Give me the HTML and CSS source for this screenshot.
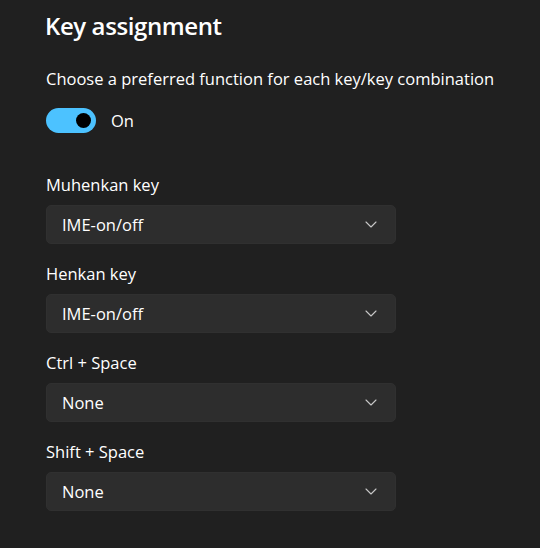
FILE: index.html
```html
<!DOCTYPE html>
<html>
<head>
<meta charset="utf-8">
<link rel="stylesheet" href="styles.css">
</head>
<body>
<main class="page">
  <h1 class="title">Key assignment</h1>
  <p class="desc">Choose a preferred function for each key/key combination</p>
  <div class="toggle-row">
    <span class="toggle"><span class="knob"></span></span>
    <span class="toggle-label">On</span>
  </div>
  <div class="fields">
    <div class="field">
      <div class="label">Muhenkan key</div>
      <div class="select"><span>IME-on/off</span><svg class="chev" width="12" height="7" viewBox="0 0 12 7"><polyline points="1,1 6,6 11,1" fill="none" stroke="#c8c8c8" stroke-width="1.1" stroke-linecap="round" stroke-linejoin="round"/></svg></div>
    </div>
    <div class="field">
      <div class="label">Henkan key</div>
      <div class="select"><span>IME-on/off</span><svg class="chev" width="12" height="7" viewBox="0 0 12 7"><polyline points="1,1 6,6 11,1" fill="none" stroke="#c8c8c8" stroke-width="1.1" stroke-linecap="round" stroke-linejoin="round"/></svg></div>
    </div>
    <div class="field">
      <div class="label">Ctrl + Space</div>
      <div class="select"><span>None</span><svg class="chev" width="12" height="7" viewBox="0 0 12 7"><polyline points="1,1 6,6 11,1" fill="none" stroke="#c8c8c8" stroke-width="1.1" stroke-linecap="round" stroke-linejoin="round"/></svg></div>
    </div>
    <div class="field">
      <div class="label">Shift + Space</div>
      <div class="select"><span>None</span><svg class="chev" width="12" height="7" viewBox="0 0 12 7"><polyline points="1,1 6,6 11,1" fill="none" stroke="#c8c8c8" stroke-width="1.1" stroke-linecap="round" stroke-linejoin="round"/></svg></div>
    </div>
  </div>
</main>
</body>
</html>
```
FILE: styles.css
```css
html, body {
  margin: 0;
  padding: 0;
  background: #202020;
  height: 100%;
}
body {
  font-family: "Open Sans", "Noto Sans", sans-serif;
  color: #ffffff;
}
.page {
  padding: 9px 0 0 46px;
  display: flex;
  flex-direction: column;
}
.title {
  margin: 0 0 0 -1px;
  font-size: 24px;
  font-weight: 600;
  line-height: 34px;
  letter-spacing: -0.4px;
}
.desc {
  margin: 24px 0 0 0;
  font-size: 16.5px;
  line-height: 24px;
  letter-spacing: 0;
}
.toggle-row {
  margin-top: 17px;
  display: flex;
  align-items: center;
  gap: 15px;
  height: 25px;
}
.toggle {
  width: 50px;
  height: 25px;
  border-radius: 13px;
  background: #4cc2ff;
  display: flex;
  align-items: center;
  justify-content: flex-end;
  padding-right: 5px;
  box-sizing: border-box;
}
.knob {
  width: 15px;
  height: 15px;
  border-radius: 50%;
  background: #000000;
}
.toggle-label {
  font-size: 16.5px;
  line-height: 24px;
}
.fields {
  margin-top: 40px;
  display: flex;
  flex-direction: column;
  gap: 18px;
}
.field {
  display: flex;
  flex-direction: column;
  gap: 8px;
}
.label {
  font-size: 16.5px;
  line-height: 24px;
  letter-spacing: 0;
}
.select {
  width: 350px;
  height: 39px;
  box-sizing: border-box;
  background: #2d2d2d;
  border: 1px solid #303030;
  border-radius: 5px;
  display: flex;
  align-items: center;
  justify-content: space-between;
  padding: 0 18px 0 15px;
  font-size: 16.5px;
  letter-spacing: 0;
}
.chev {
  display: block;
}
```
